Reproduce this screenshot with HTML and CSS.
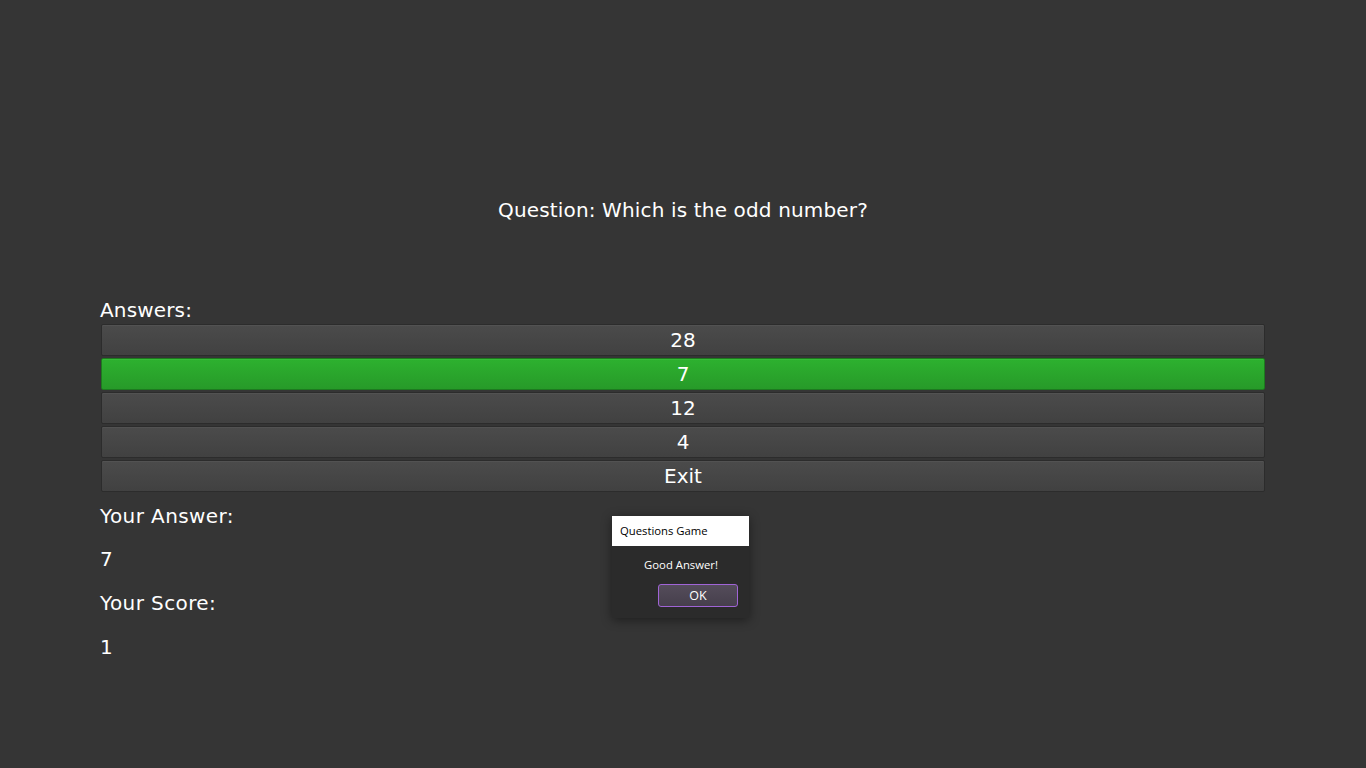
FILE: index.html
```html
<!DOCTYPE html>
<html>
<head>
<meta charset="utf-8">
<link rel="stylesheet" href="styles.css">
</head>
<body>
<main class="app">
  <h1 class="question">Question: Which is the odd number?</h1>
  <section class="answers">
    <div class="label">Answers:</div>
    <div class="buttons">
      <button class="btn">28</button>
      <button class="btn btn-correct">7</button>
      <button class="btn">12</button>
      <button class="btn">4</button>
      <button class="btn">Exit</button>
    </div>
  </section>
  <section class="result">
    <div class="line">Your Answer:</div>
    <div class="line">7</div>
    <div class="line">Your Score:</div>
    <div class="line">1</div>
  </section>
</main>
<div class="dialog">
  <div class="dialog-title">Questions Game</div>
  <div class="dialog-body">
    <div class="dialog-msg">Good Answer!</div>
    <div class="dialog-actions"><button class="ok">OK</button></div>
  </div>
</div>
</body>
</html>
```
FILE: styles.css
```css
html, body {
  margin: 0;
  padding: 0;
  background: #353535;
  height: 100%;
}
body {
  font-family: "DejaVu Sans", Verdana, sans-serif;
  color: #ffffff;
  overflow: hidden;
}
.app {
  padding: 198px 101px 0 100px;
}
.question {
  margin: 0;
  font-weight: normal;
  font-size: 20px;
  line-height: 24px;
  letter-spacing: 0.15px;
  text-align: center;
  padding-left: 1px;
}
.answers {
  margin-top: 78px;
}
.label {
  font-size: 20px;
  line-height: 20px;
  padding-bottom: 4px;
  letter-spacing: 0.15px;
}
.buttons {
  display: flex;
  flex-direction: column;
  gap: 2px;
  padding-left: 1px;
}
.btn {
  height: 32px;
  border: 1px solid #2c2c2c;
  border-radius: 2px;
  background: linear-gradient(#4b4b4b, #414141);
  box-shadow: inset 0 1px 0 #525252;
  color: #fff;
  font-family: "DejaVu Sans", Verdana, sans-serif;
  font-size: 20px;
  line-height: 30px;
  padding: 0;
  text-align: center;
}
.btn-correct {
  background: linear-gradient(#2db12f, #279a29);
  border-color: #1d7a1f;
  box-shadow: inset 0 1px 0 #35bb37;
}
.result {
  margin-top: 12px;
}
.line {
  font-size: 20px;
  line-height: 24px;
  margin-bottom: 20px;
  letter-spacing: 0.4px;
}
.line:nth-child(2) {
  margin-top: -1px;
}
.dialog {
  position: absolute;
  left: 612px;
  top: 516px;
  width: 137px;
  height: 102px;
  background: #2b2b2b;
  box-shadow: 0 2px 10px rgba(0,0,0,0.45);
  font-family: "Open Sans", "Noto Sans", sans-serif;
}
.dialog-title {
  height: 30px;
  background: #ffffff;
  color: #000;
  font-size: 11.3px;
  line-height: 30px;
  padding-left: 8px;
}
.dialog-body {
  display: flex;
  flex-direction: column;
  align-items: center;
}
.dialog-msg {
  font-size: 11.3px;
  line-height: 16px;
  margin-top: 11px;
  color: #fff;
  padding-left: 1px;
}
.dialog-actions {
  align-self: stretch;
  display: flex;
  justify-content: flex-end;
  padding-right: 11px;
  margin-top: 11px;
}
.ok {
  width: 80px;
  height: 23px;
  border: 1px solid #a064d6;
  border-radius: 3px;
  background: linear-gradient(#544c5a, #463f4c);
  color: #fff;
  font-family: "Open Sans", "Noto Sans", sans-serif;
  font-size: 12.5px;
  padding: 0;
}
```
